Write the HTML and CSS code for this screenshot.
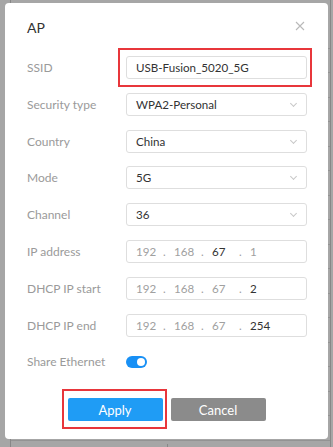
FILE: index.html
```html
<!DOCTYPE html>
<html lang="en">

<head>
    <title>AP settings</title>
    <link rel="stylesheet" href="styles.css">
</head>

<body>
    <!--Page behind the dialog-->
    <div class="page">
        <div class="row"></div>
        <div class="row"></div>
        <div class="row"></div>
        <div class="row"></div>
        <div class="row"></div>
        <div class="row"></div>
        <div class="row"></div>
        <div class="row"></div>
        <div class="row"></div>
        <div class="row"></div>
        <div class="row"></div>
        <div class="row"></div>
        <div class="row"></div>
        <div class="row"></div>
        <div class="row"></div>
        <div class="row"></div>
        <div class="row"></div>
        <div class="row last">
            <span class="cell first">MAC address</span>
            <span class="cell">0c:40:bf:be:7e:fa</span>
        </div>
    </div>

    <div class="mask"></div>

    <!--Dialog-->
    <div class="modal">
        <div class="modal-head">
            <span class="title">AP</span>
            <svg class="close" width="10" height="10" viewBox="0 0 10 10">
                <path d="M1 1 L9 9 M9 1 L1 9" stroke="#b9b9b9" stroke-width="1.1" fill="none" />
            </svg>
        </div>

        <div class="form">
            <div class="field">
                <label>SSID</label>
                <div class="control hl">
                    <div class="input">USB-Fusion_5020_5G</div>
                </div>
            </div>
            <div class="field">
                <label>Security type</label>
                <div class="control">
                    <div class="input select">WPA2-Personal<i class="arrow"></i></div>
                </div>
            </div>
            <div class="field">
                <label>Country</label>
                <div class="control">
                    <div class="input select">China<i class="arrow"></i></div>
                </div>
            </div>
            <div class="field">
                <label>Mode</label>
                <div class="control">
                    <div class="input select">5G<i class="arrow"></i></div>
                </div>
            </div>
            <div class="field">
                <label>Channel</label>
                <div class="control">
                    <div class="input select">36<i class="arrow"></i></div>
                </div>
            </div>
            <div class="field">
                <label>IP address</label>
                <div class="control">
                    <div class="input ip">
                        <span class="seg">192</span><span class="dot">.</span>
                        <span class="seg">168</span><span class="dot">.</span>
                        <span class="seg on">67</span><span class="dot">.</span>
                        <span class="seg">1</span>
                    </div>
                </div>
            </div>
            <div class="field">
                <label>DHCP IP start</label>
                <div class="control">
                    <div class="input ip">
                        <span class="seg">192</span><span class="dot">.</span>
                        <span class="seg">168</span><span class="dot">.</span>
                        <span class="seg">67</span><span class="dot">.</span>
                        <span class="seg on">2</span>
                    </div>
                </div>
            </div>
            <div class="field">
                <label>DHCP IP end</label>
                <div class="control">
                    <div class="input ip">
                        <span class="seg">192</span><span class="dot">.</span>
                        <span class="seg">168</span><span class="dot">.</span>
                        <span class="seg">67</span><span class="dot">.</span>
                        <span class="seg on">254</span>
                    </div>
                </div>
            </div>
            <div class="field">
                <label>Share Ethernet</label>
                <div class="control">
                    <span class="switch"></span>
                </div>
            </div>
        </div>

        <div class="buttons">
            <button class="btn apply hl-btn">Apply</button>
            <button class="btn cancel">Cancel</button>
        </div>
    </div>
</body>

</html>
```

FILE: styles.css
```css
*,
*:before,
*:after {
    padding: 0;
    margin: 0;
    box-sizing: border-box;
}

body {
    height: 100vh;
    overflow: hidden;
    background: #ffffff;
    font-family: 'Lato', 'Open Sans', sans-serif;
}

/* page behind */
.page {
    margin-left: 10px;
    border-left: 1px solid #cfcfcf;
    border-right: 1px solid #cfcfcf;
    margin-right: 2px;
    padding-top: 24px;
}

.row {
    height: 24.5px;
    border-bottom: 1px solid #e2e2e2;
}

.row.last {
    display: flex;
    height: 30px;
    border-bottom: none;
    padding-top: 3px;
    font-size: 13px;
    color: #333;
}

.cell {
    padding-left: 11px;
}

.cell.first {
    width: 157px;
    border-right: 1px solid #cfcfcf;
}

.mask {
    position: fixed;
    top: 0;
    left: 0;
    right: 0;
    bottom: 0;
    background: rgba(0, 0, 0, 0.35);
}

/* dialog */
.modal {
    position: fixed;
    top: 3px;
    left: 5px;
    width: 323px;
    height: 436px;
    background: #ffffff;
    border-radius: 4px;
    padding: 14px 21px 0 22px;
}

.modal-head {
    display: flex;
    align-items: center;
    justify-content: space-between;
    height: 20px;
}

.title {
    font-size: 14px;
    color: #333;
}

.close {
    margin-right: 2px;
    margin-top: -3px;
}

.form {
    margin-top: 19px;
    display: flex;
    flex-direction: column;
    gap: 13.8px;
}

.field {
    display: flex;
    align-items: center;
    height: 23px;
}

.field label {
    width: 99px;
    font-size: 12px;
    color: #9a9a9a;
}

.control {
    position: relative;
    flex: 1;
}

.input {
    position: relative;
    height: 23px;
    border: 1px solid #dedede;
    border-radius: 3px;
    padding-left: 9px;
    font-size: 11.6px;
    line-height: 21px;
    color: #333;
}

.arrow {
    position: absolute;
    right: 10px;
    top: 7px;
    width: 5px;
    height: 5px;
    border-right: 1px solid #c8c8c8;
    border-bottom: 1px solid #c8c8c8;
    transform: rotate(45deg);
}

.ip {
    display: flex;
    color: #a0a0a0;
}

.seg {
    width: 26px;
}

.dot {
    width: 12px;
    padding-left: 1px;
}

.seg.on {
    color: #333;
}

.switch {
    display: block;
    position: relative;
    width: 21px;
    height: 12px;
    border-radius: 6px;
    background: #1890f5;
}

.switch:after {
    content: "";
    position: absolute;
    top: 2px;
    right: 2px;
    width: 8px;
    height: 8px;
    border-radius: 50%;
    background: #ffffff;
}

/* red marks */
.hl:after {
    content: "";
    position: absolute;
    top: -8px;
    bottom: -8px;
    left: -8px;
    right: -5px;
    border: 2px solid #e8363b;
}

.buttons {
    display: flex;
    justify-content: center;
    gap: 8px;
    margin-top: 25px;
    padding-right: 1px;
}

.btn {
    position: relative;
    width: 95px;
    height: 23px;
    border: none;
    border-radius: 2px;
    font-family: 'Lato', sans-serif;
    font-size: 13px;
    color: #ffffff;
}

.apply {
    background: #1f9cf5;
}

.cancel {
    background: #8b8b8b;
}

.hl-btn:after {
    content: "";
    position: absolute;
    top: -9px;
    bottom: -8px;
    left: -6px;
    right: -4px;
    border: 2px solid #e8363b;
}
```
